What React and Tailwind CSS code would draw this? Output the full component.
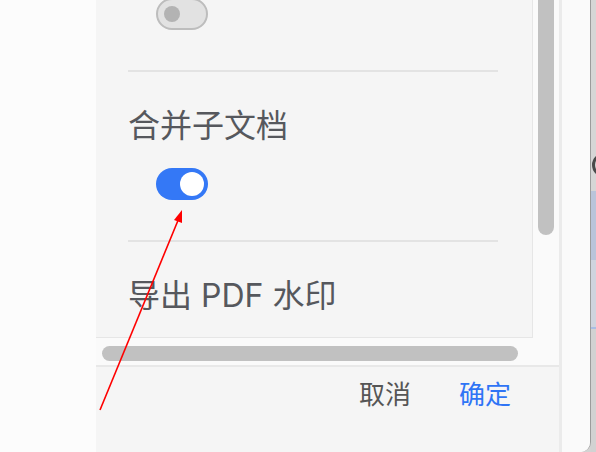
import React from 'react';

const font = { fontFamily: "Inter, 'Noto Sans CJK SC', sans-serif" };

function Toggle({ on }) {
  if (on) {
    return (
      <div className="w-[52px] h-[32px] rounded-full bg-[#3478f6] flex items-center justify-end pr-[4px]">
        <div className="w-[24px] h-[24px] rounded-full bg-white" />
      </div>
    );
  }
  return (
    <div className="w-[52px] h-[32px] rounded-full bg-[#e2e2e2] border-2 border-[#bdbdbd] flex items-center pl-[6px]">
      <div className="w-[16px] h-[16px] rounded-full bg-[#b3b3b3]" />
    </div>
  );
}

function Section({ title, children }) {
  return (
    <div className="pt-[34px]">
      <div className="text-[32px] leading-[40px] text-[#56585d] whitespace-nowrap">{title}</div>
      {children}
    </div>
  );
}

export default function App() {
  return (
    <div className="relative w-[596px] h-[452px] flex overflow-hidden bg-[#d3d3d3]" style={font}>
      {/* app window */}
      <div className="w-[591px] shrink-0 h-full flex bg-[#fcfcfc] border-r border-[#9c9c9c] rounded-br-[10px] overflow-hidden">
        <div className="w-[96px] shrink-0 h-full bg-[#fcfcfc]" />

        {/* dialog body */}
        <div className="w-[466px] shrink-0 h-full flex flex-col bg-[#f5f5f5] border-r-[3px] border-[#ebebeb]">
          <div className="flex h-[338px]">
            <div className="w-[437px] shrink-0 h-full overflow-hidden border-r border-b border-[#e6e6e6] pl-[32px]">
              <div className="-mt-[2px] pl-[28px] pb-[40px]">
                <Toggle on={false} />
              </div>
              <div className="w-[370px] h-[2px] bg-[#e3e3e3]" />
              <Section title="合并子文档">
                <div className="mt-[22px] pl-[28px] pb-[40px]">
                  <Toggle on />
                </div>
              </Section>
              <div className="w-[370px] h-[2px] bg-[#e3e3e3]" />
              <Section title="导出 PDF 水印" />
            </div>
            {/* vertical scrollbar */}
            <div className="w-[26px] h-full bg-[#fafafa] pl-[5px]">
              <div className="w-[16px] h-[235px] rounded-b-full bg-[#c1c1c1]" />
            </div>
          </div>
          {/* horizontal scrollbar */}
          <div className="h-[29px] bg-[#fafafa] border-b-2 border-[#e8e8e8] pt-[8px] pl-[6px]">
            <div className="w-[416px] h-[15px] rounded-full bg-[#c1c1c1]" />
          </div>
          {/* footer */}
          <div className="flex-1 flex justify-end gap-[48px] pt-[14px] pr-[48px] text-[26px] leading-[28px]">
            <span className="text-[#565656]">取消</span>
            <span className="text-[#2f74f5]">确定</span>
          </div>
        </div>

        <div className="flex-1 h-full bg-[#fafafa]" />
      </div>

      {/* what lies behind the window */}
      <div className="flex-1 min-w-0 overflow-hidden h-full flex flex-col">
        <div className="h-[153px] bg-[#d6d6d6]" />
        <div className="h-[24px] bg-[#d6d6d6] flex items-center">
          <div className="w-[24px] h-[24px] shrink-0 rounded-full border-[3px] border-[#4a4a4a] ml-[1px]" />
        </div>
        <div className="h-[14px] bg-[#d6d6d6]" />
        <div className="h-[69px] bg-[#b9c4da]" />
        <div className="h-[67px] bg-[#cfd4de]" />
        <div className="h-[2px] bg-[#a9bde4]" />
        <div className="flex-1 bg-[#d2d2d2]" />
      </div>

      {/* red annotation arrow */}
      <svg className="absolute left-0 top-0 pointer-events-none" width="596" height="452" viewBox="0 0 596 452">
        <line x1="100" y1="410" x2="179" y2="218" stroke="#ff0000" strokeWidth="1.6" />
        <polygon points="182,210 174,220 182,223" fill="#ff0000" />
      </svg>
    </div>
  );
}
